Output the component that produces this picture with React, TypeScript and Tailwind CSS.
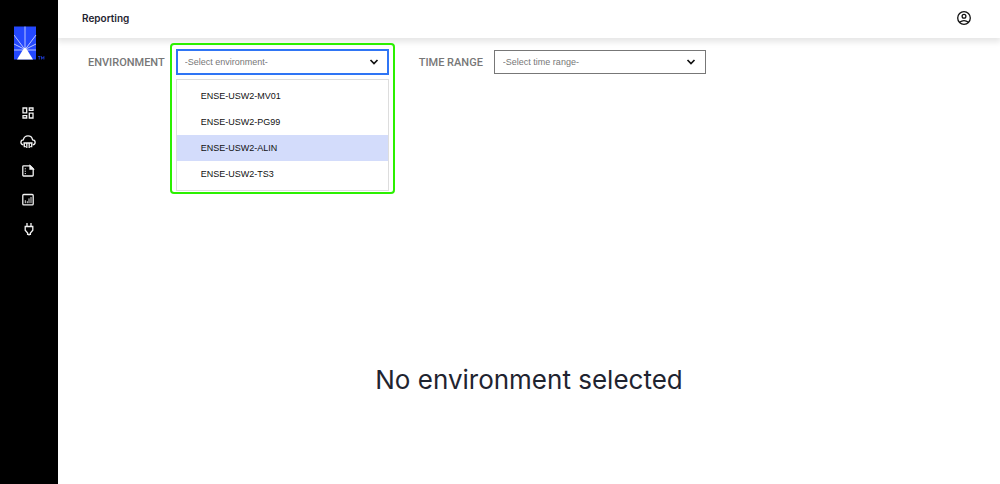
import { useState } from "react";
import type { ReactNode } from "react";

const environments = ["ENSE-USW2-MV01", "ENSE-USW2-PG99", "ENSE-USW2-ALIN", "ENSE-USW2-TS3"];

function Logo() {
  return (
    <svg viewBox="0 0 32 34" className="h-[34px] w-8" role="img" aria-label="Home">
      <rect y="0.500" width="22" height="33" fill="#2448ff" />
      <g stroke="#c9d3ff" strokeWidth="0.9">
        <path d="M11 0.500v23M0 9l10.500 14M22 9L11.500 23M0 18l10 5M22 18l-10 5M0 24h22" />
      </g>
      <path d="M11 21.500l2.200 2.500L19 33.500H3l5.800-9.500z" fill="#fff" />
      <path d="M24 30.500h2.500M25.250 30.500v3M27.500 33.500v-3l1.200 2 1.200-2v3" fill="none" stroke="#2448ff" strokeWidth="0.7" />
    </svg>
  );
}

function NavIcon({ children }: { children: ReactNode }) {
  return (
    <svg viewBox="0 0 16 16" className="size-4" fill="none" stroke="#f2f2f2" strokeWidth="1.3" aria-hidden="true">
      {children}
    </svg>
  );
}

const navigation = [
  {
    label: "Dashboard",
    icon: <path d="M3 3h3.700v4.800H3zM9.300 3h3.700v2.300H9.300zM3 10.700h3.700v2.300H3zM9.300 8.200h3.700v4.800H9.300z" />,
  },
  {
    label: "Cloud",
    icon: (
      <>
        <path d="M3.500 10.800C-.1 10.300.3 6 3.300 5.900 4 2.800 6 1.900 8 1.900s4 1 4.600 3.900c3.300.2 3.500 4.500 0 5" />
        <path d="M3.400 9h9.200M4.300 9v3.600h1.500M6.800 9v5.100M9.200 9v5.100M11.700 9v3.600h-1.500" />
      </>
    ),
  },
  {
    label: "Documents",
    icon: (
      <>
        <path d="M3.800 2.800h6.400L13.200 5.800v6.400q0 .8-.8.8H3.600q-.8 0-.8-.8V3.600q0-.8.8-.8z" />
        <path d="M10 2.800l3.200 3.200h-3.200z" fill="#f2f2f2" />
        <path d="M4.700 5.800h1.300M4.700 8.200h1.300M4.700 10.600h1.300" strokeWidth="0.900" />
      </>
    ),
  },
  {
    label: "Reporting",
    icon: (
      <>
        <rect x="2.800" y="2.500" width="10.400" height="10.400" rx="1" />
        <path d="M5.300 8.200v3M7.300 9.200v2M9 6.400v4.800M11 5v6.200" strokeWidth="0.900" />
      </>
    ),
  },
  {
    label: "Connections",
    icon: <path d="M7 2v3.500M11 2v3.500M4.600 5.500h8.800M5.200 5.500v3.800L7.600 12v1.400h2.800V12l2.400-2.700V5.500M9 13.400v1.200" />,
  },
];

function Chevron() {
  return (
    <svg viewBox="0 0 10 8" className="pointer-events-none absolute inset-y-0 right-2.5 my-auto h-2 w-2.5" fill="none" stroke="#111" strokeWidth="1.700" aria-hidden="true">
      <path d="M1.500 2l3.500 3.500L8.500 2" />
    </svg>
  );
}

export default function App() {
  const [open, setOpen] = useState(true);
  const [environment, setEnvironment] = useState("");

  return (
    <div className="flex min-h-screen bg-white font-['Liberation_Sans',sans-serif] text-[#1f2430]">
      <aside className="flex w-[58px] shrink-0 flex-col bg-black pt-[26px]">
        <a href="#" className="ml-3.5 block">
          <Logo />
        </a>
        <nav className="mt-[45px] flex flex-col items-center gap-[13px] pr-[3px]">
          {navigation.map((item) => (
            <a key={item.label} href="#" aria-label={item.label} className="block">
              <NavIcon>{item.icon}</NavIcon>
            </a>
          ))}
        </nav>
      </aside>

      <div className="flex min-w-0 flex-1 flex-col">
        <header className="flex h-[38px] items-center justify-between pr-7 pb-0.5 pl-6 shadow-[0_3px_6px_1px_rgba(0,0,0,0.10)]">
          <h1 className="font-['Inter',sans-serif] text-[10px] font-semibold">Reporting</h1>
          <button type="button" aria-label="Account" className="block">
            <svg viewBox="0 0 16 16" className="size-4" fill="none" stroke="#111" strokeWidth="1.300" aria-hidden="true">
              <circle cx="8" cy="8" r="6.300" />
              <circle cx="8" cy="6.200" r="1.900" />
              <path d="M3.500 12.300Q8 8.800 12.500 12.300" />
            </svg>
          </button>
        </header>

        <main className="flex flex-1 flex-col">
          <div className="flex items-center gap-[30px] pt-[11px] pl-[30px]">
            <div className="flex items-center gap-[11px]">
              <label htmlFor="environment" className="pt-0.5 font-['Roboto',sans-serif] text-[11px] font-medium text-[#777]">
                ENVIRONMENT
              </label>
              <div className="relative w-[213px]">
                <select
                  id="environment"
                  value={environment}
                  onChange={(event) => setEnvironment(event.target.value)}
                  onMouseDown={(event) => {
                    event.preventDefault();
                    setOpen(!open);
                  }}
                  className="block h-[26px] w-full appearance-none border-2 border-[#2f75f5] bg-white px-[7px] pt-0.5 text-[9px] text-[#777] outline-none"
                >
                  <option value="">-Select environment-</option>
                  {environments.map((name) => (
                    <option key={name}>{name}</option>
                  ))}
                </select>
                <Chevron />
                {open && (
                  <div className="pointer-events-none absolute -inset-x-1.5 -top-1.5 rounded-[4px] border-2 border-[#2bf000] px-1 pt-[34px] pb-px">
                    <ul role="listbox" aria-label="Environments" className="pointer-events-auto border border-[#ddd] bg-white py-[3px]">
                      {environments.map((name) => (
                        <li
                          key={name}
                          role="option"
                          aria-selected={name === environment}
                          onClick={() => {
                            setEnvironment(name);
                            setOpen(false);
                          }}
                          className={`flex h-[26px] items-center pt-px pl-6 text-[9px] text-[#111] hover:bg-[#d3dcfb] ${name === "ENSE-USW2-ALIN" ? "bg-[#d3dcfb]" : ""}`}
                        >
                          {name}
                        </li>
                      ))}
                    </ul>
                  </div>
                )}
              </div>
            </div>
            <div className="flex items-center gap-[11px]">
              <label htmlFor="range" className="pt-0.5 font-['Roboto',sans-serif] text-[11px] font-medium text-[#777]">
                TIME RANGE
              </label>
              <div className="relative w-[212px]">
                <select id="range" className="block h-6 w-full appearance-none border border-[#777] bg-white px-2 pt-0.5 text-[9px] text-[#777]">
                  <option>-Select time range-</option>
                </select>
                <Chevron />
              </div>
            </div>
          </div>
          <p className="mt-[285px] text-center font-['Inter',sans-serif] text-[26px] leading-10">No environment selected</p>
        </main>
      </div>
    </div>
  );
}
